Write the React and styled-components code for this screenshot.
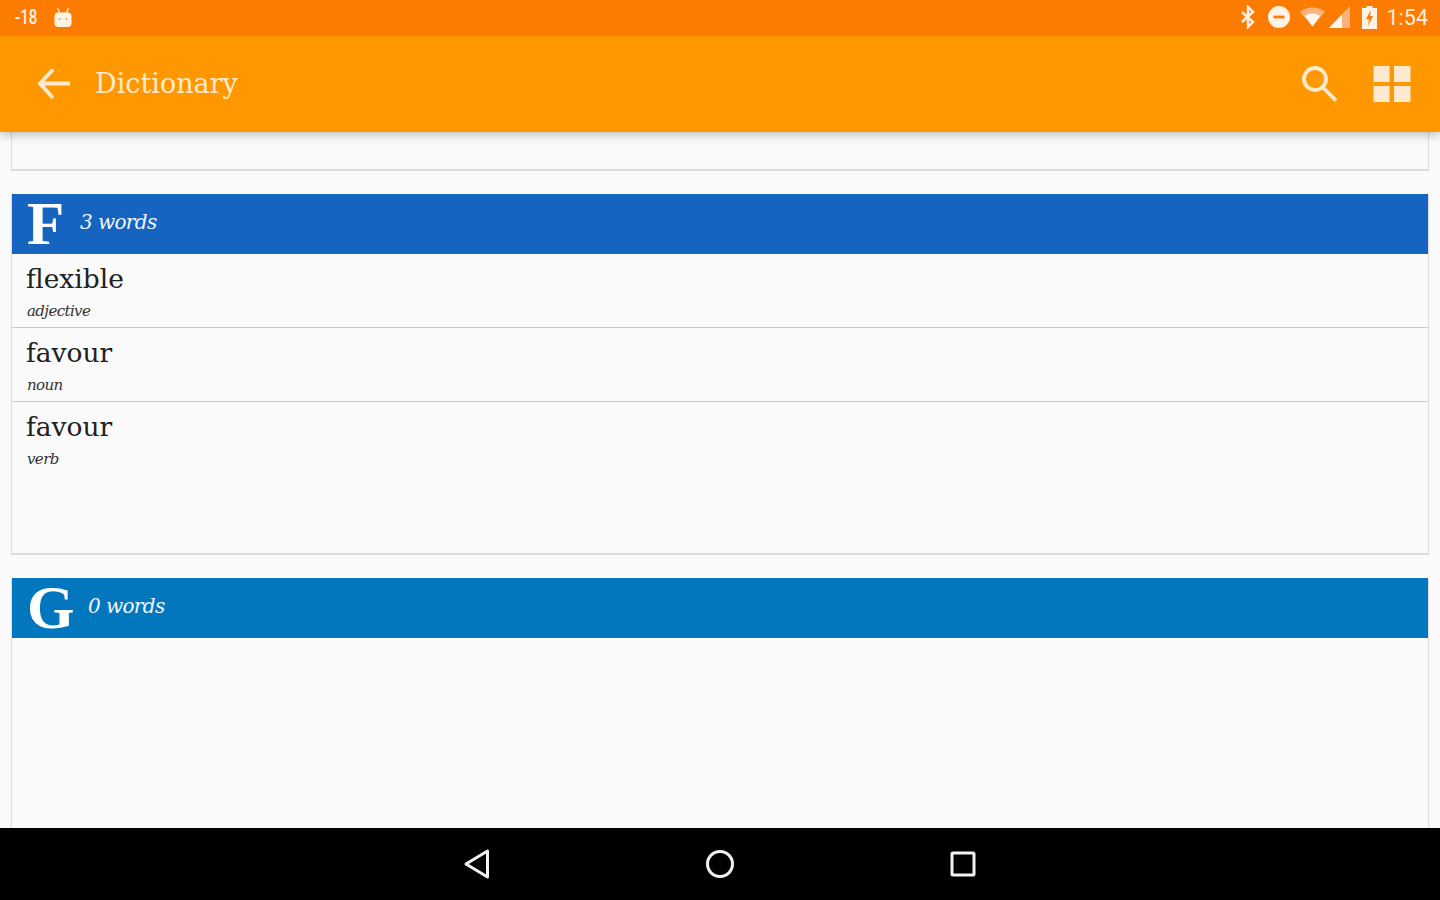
import React from 'react';
import styled, { createGlobalStyle } from 'styled-components';

const Global = createGlobalStyle`
  html, body { margin: 0; padding: 0; background: #fafafa; }
  * { box-sizing: border-box; }
`;
const serif = `"DejaVu Serif", "Liberation Serif", serif`;
const Screen = styled.div`
  width: 1440px; height: 900px; display: flex; flex-direction: column; overflow: hidden; background: #fafafa;
`;
const StatusBar = styled.div`
  height: 36px; flex: none; background: #fb7c00; display: flex; align-items: center; padding: 0 12px 2px 15px; color: #fff3e6;
  font-family: Roboto, sans-serif; position: relative; z-index: 3;
`;
const Ticker = styled.span`
  font-size: 21px; font-weight: 500; display: inline-block; width: 24px; transform: scaleX(0.72); transform-origin: left center; white-space: nowrap;
`;
const Left = styled.div`display: flex; align-items: center; gap: 14px; flex: 1;`;
const Right = styled.div`display: flex; align-items: center;`;
const Gap = styled.span`width: ${p => p.$w}px; flex: none;`;
const Clock = styled.span`font-size: 21.5px; font-weight: 400; margin-left: 10px; color: #ffeedd;`;
const Toolbar = styled.header`
  height: 96px; flex: none; background: #ff9800; display: flex; align-items: center; padding: 0 29px 0 36px;
  box-shadow: 0 2px 10px rgba(0,0,0,.28); position: relative; z-index: 2; color: #ffe9cf;
`;
const Title = styled.h1`
  margin: 0 0 2px 23px; font: 400 27px ${serif}; flex: 1;
`;
const Actions = styled.div`display: flex; align-items: center; gap: 35px;`;
const Content = styled.main`
  flex: 1; min-height: 0; overflow: hidden; padding: 0 11px; display: flex; flex-direction: column; gap: 23px;
`;
const Card = styled.section`
  flex: ${p => p.$grow ? '1 0 auto' : 'none'}; height: ${p => p.$h ? p.$h + 'px' : 'auto'};
  background: #fafafa; border: 1px solid #dcdcdc; border-top: none;
  border-bottom: ${p => p.$open ? 'none' : '2px solid #dcdcdc'};
`;
const Header = styled.div`
  height: 60px; background: ${p => p.$color}; display: flex; align-items: center; color: #fff; padding-left: 15px;
`;
const Letter = styled.span`
  font: 700 61px/60px "Liberation Serif", serif; width: ${p => p.$w}px; flex: none;
`;
const Count = styled.span`
  font: italic 400 20px ${serif}; letter-spacing: -0.6px; color: #f2f7fc; margin-bottom: 4px;
`;
const Row = styled.div`
  height: ${p => p.$h}px; padding: 8px 0 0 14px; border-bottom: ${p => p.$last ? 'none' : '1px solid #c8c8c8'};
`;
const Word = styled.div`font: 400 26.5px/34px ${serif}; color: #212121;`;
const Part = styled.div`font: italic 400 15px/20px ${serif}; color: #333; margin: 5px 0 0 1px; letter-spacing: -0.6px;`;
const Nav = styled.nav`
  height: 72px; flex: none; background: #000; display: flex; justify-content: center; align-items: center; gap: 201px; position: relative; z-index: 2;
`;
const NavSlot = styled.div`width: 42px; height: 42px; display: flex; align-items: center; justify-content: center;`;

const Robot = () => (
  <svg width="20" height="20" viewBox="0 0 20 20" fill="#fff3e6"><rect x="1.500" y="5.500" width="17" height="14.500" rx="4"/><path d="M4.500 1l2 5M15.500 1l-2 5" stroke="#fff3e6" strokeWidth="1.300"/><circle cx="6.500" cy="12" r="1" fill="#fb9a40"/><circle cx="13.500" cy="12" r="1" fill="#fb9a40"/></svg>
);
const Bluetooth = () => (
  <svg width="16" height="24" viewBox="0 0 16 24" fill="none" stroke="#fff3e6" strokeWidth="2.400"><path d="M2 7l11 10-5 5V2l5 5L2 17"/></svg>
);
const Dnd = () => (
  <svg width="22" height="22" viewBox="0 0 22 22"><circle cx="11" cy="11" r="11" fill="#fff3e6"/><rect x="5.500" y="9.600" width="11" height="2.800" fill="#fb7c00"/></svg>
);
const Wifi = () => (
  <svg width="25" height="20" viewBox="0 0 26 20"><path d="M0 4.500C7-1.500 19-1.500 26 4.500L13 20z" fill="#fdb27a"/><path d="M5 9c5-3.400 11-3.400 16 0l-8 11z" fill="#fff8ef"/></svg>
);
const Signal = () => (
  <svg width="21" height="22" viewBox="0 0 21 22"><path d="M0 22L21 0v22z" fill="#fdb27a"/><path d="M0 22L13 8.400V22z" fill="#fff8ef"/></svg>
);
const Battery = () => (
  <svg width="15" height="23" viewBox="0 0 15 23"><path d="M4.500 0h6v2H15v21H0V2h4.500z" fill="#fff3e6"/><path d="M9 4L4 13h3l-1 7 5-10H8z" fill="#fb7c00"/></svg>
);
const BackArrow = () => (
  <svg width="36" height="36" viewBox="0 0 36 36" fill="none" stroke="#ffe9cf" strokeWidth="3.800"><path d="M34 17.500H5M17 3.500L4 17.500 17 32"/></svg>
);
const Search = () => (
  <svg width="38" height="38" viewBox="0 0 38 38" fill="none" stroke="#ffe9cf" strokeWidth="3.800"><circle cx="15" cy="14" r="11"/><path d="M23 22.500l13 13"/></svg>
);
const Grid = () => (
  <svg width="38" height="38" viewBox="0 0 38 38" fill="#ffe9cf"><rect x="0.500" y="1" width="16" height="16"/><rect x="21" y="1" width="16.500" height="16"/><rect x="0.500" y="21" width="16" height="16"/><rect x="21" y="21" width="16.500" height="16"/></svg>
);

export default function App() {
  return (
    <Screen>
      <Global />
      <StatusBar>
        <Left><Ticker>-18</Ticker><Robot /></Left>
        <Right>
          <Bluetooth />
          <Gap $w={12} />
          <Dnd />
          <Gap $w={10} />
          <Wifi />
          <Gap $w={4} />
          <Signal />
          <Gap $w={12} />
          <Battery />
          <Clock>1:54</Clock>
        </Right>
      </StatusBar>
      <Toolbar>
        <BackArrow />
        <Title>Dictionary</Title>
        <Actions><Search /><Grid /></Actions>
      </Toolbar>
      <Content>
        <Card $h={39} />
        <Card>
          <Header $color="#1565c0"><Letter $w={53}>F</Letter><Count>3 words</Count></Header>
          <Row $h={74}><Word>flexible</Word><Part>adjective</Part></Row>
          <Row $h={74}><Word>favour</Word><Part>noun</Part></Row>
          <Row $h={151} $last><Word>favour</Word><Part>verb</Part></Row>
        </Card>
        <Card $grow $open>
          <Header $color="#0277bd"><Letter $w={61}>G</Letter><Count>0 words</Count></Header>
        </Card>
      </Content>
      <Nav>
        <NavSlot><svg width="26" height="30" viewBox="0 0 26 30" fill="none" stroke="#f2f2f2" strokeWidth="3" strokeLinejoin="round"><path d="M23.500 2v26L2 15z"/></svg></NavSlot>
        <NavSlot><svg width="30" height="30" viewBox="0 0 30 30" fill="none" stroke="#f2f2f2" strokeWidth="3"><circle cx="15" cy="15" r="12.500"/></svg></NavSlot>
        <NavSlot><svg width="26" height="26" viewBox="0 0 26 26" fill="none" stroke="#f2f2f2" strokeWidth="3"><rect x="2" y="2" width="22" height="22" rx="1"/></svg></NavSlot>
      </Nav>
    </Screen>
  );
}
